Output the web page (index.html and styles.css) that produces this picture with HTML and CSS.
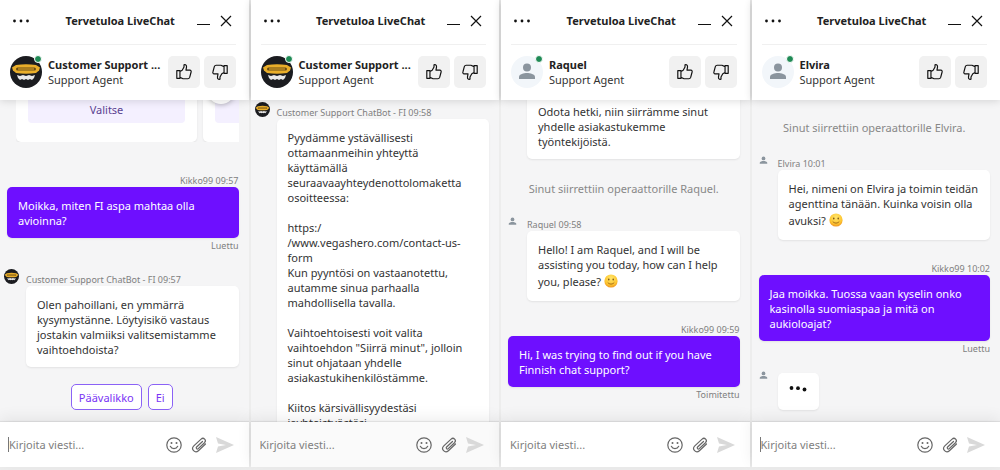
FILE: index.html
```html
<!DOCTYPE html>
<html lang="fi">
  <head>
    <meta charset="UTF-8" />
    <meta name="viewport" content="width=device-width, initial-scale=1.0" />
    <title>Tervetuloa LiveChat</title>
    <link rel="stylesheet" href="styles.css">
  </head>
  <body>
    <svg class="sprite" aria-hidden="true">
      <symbol id="icon-bot" viewBox="0 0 32 32">
        <circle cx="16" cy="16" r="16" fill="#1b1c20" />
        <path d="M6 9q10-1.500 20 0l4 2.500-1 3-3 2.500q-10 1.500-20 0l-3-2.500-1-3z" fill="#e9ae2a" />
        <rect x="6" y="11.500" width="20" height="3" rx="1.500" fill="#6b4d14" />
        <rect x="8" y="12.500" width="16" height="1" fill="#e9ae2a" />
        <path d="M7 19l3 1 3-1 3 1 3-1 3 1 3-1-1 3-2 2-2-1-2 1-2-1-2 1-2-1-2 1-2-2z" fill="#e8e8e8" />
      </symbol>
      <symbol id="icon-person" viewBox="0 0 32 32">
        <circle cx="16" cy="11.500" r="4" />
        <path d="M8 23v-2c0-3 5-4 8-4s8 1 8 4v2z" />
      </symbol>
      <symbol id="icon-thumb" viewBox="0 0 20 20">
        <path d="M2 8.500h3.500v8.500H2zM5.500 9.500L8 8l2-3.500V2c2-.5 3 .5 2.800 2.500L12.200 8h4.300c1.200 0 1.700 1 1.400 2l-1.600 6c-.3 1-1 1.500-2 1.500H9L5.500 16z" />
      </symbol>
      <symbol id="icon-smile" viewBox="0 0 16 16">
        <circle cx="8" cy="8" r="7.200" fill="none" stroke="#666" stroke-width="1.200" />
        <circle cx="5.500" cy="6" r="1" fill="#666" />
        <circle cx="10.500" cy="6" r="1" fill="#666" />
        <path d="M4.300 9.300c1.400 3 6 3 7.400 0" fill="none" stroke="#666" stroke-width="1.200" stroke-linecap="round" />
      </symbol>
      <symbol id="icon-clip" viewBox="0 0 18 18">
        <path d="M12.500 5.500L6.600 11c-1.100 1.100.4 2.700 1.600 1.600l6.300-5.900c2.400-2.400-.9-5.900-3.400-3.600L3.800 9.900c-3.300 3.200 1.200 8 4.600 4.800L15.500 8" fill="none" stroke="#666" stroke-width="1.200" stroke-linecap="round" />
      </symbol>
      <symbol id="icon-send" viewBox="0 0 18 16">
        <path d="M0 0l18 8-18 8 2-6.500L10 8 2 6.500z" fill="#d9d9d9" />
      </symbol>
      <symbol id="icon-close" viewBox="0 0 12 12">
        <path d="M1 1l10 10M11 1L1 11" fill="none" stroke="#111" stroke-width="1.200" />
      </symbol>
      <symbol id="icon-dots" viewBox="0 0 18 4">
        <circle cx="2.500" cy="2" r="1.400" />
        <circle cx="9" cy="2" r="1.400" />
        <circle cx="15.500" cy="2" r="1.400" />
      </symbol>
      <symbol id="icon-typing" viewBox="0 0 18 6">
        <circle cx="2.500" cy="2" r="1.900" />
        <circle cx="9" cy="2.200" r="1.900" />
        <circle cx="15.500" cy="3.500" r="1.900" />
      </symbol>
      <radialGradient id="face" cx=".5" cy=".3" r=".7">
        <stop offset="0" stop-color="#ffe56b" />
        <stop offset=".7" stop-color="#fdc530" />
        <stop offset="1" stop-color="#ee9322" />
      </radialGradient>
      <symbol id="icon-emoji" viewBox="0 0 14 14">
        <circle cx="7" cy="7" r="6.600" fill="url(#face)" />
        <ellipse cx="4.800" cy="5.500" rx=".7" ry="1" fill="#6b4511" />
        <ellipse cx="9.200" cy="5.500" rx=".7" ry="1" fill="#6b4511" />
        <path d="M4 8.800c1.500 1.800 4.500 1.800 6 0" fill="none" stroke="#8a5210" stroke-width=".8" stroke-linecap="round" />
      </symbol>
    </svg>

    <main class="chats">
      <section class="chat">
        <header class="chat-header">
          <div class="title-bar">
            <button class="icon-button" aria-label="Valikko"><svg class="icon-dots"><use href="#icon-dots" /></svg></button>
            <h2 class="title">Tervetuloa LiveChat</h2>
            <button class="icon-button minimize" aria-label="Pienennä"></button>
            <button class="icon-button" aria-label="Sulje"><svg class="icon-close"><use href="#icon-close" /></svg></button>
          </div>
          <div class="agent">
            <div class="avatar"><svg><use href="#icon-bot" /></svg><span class="online"></span></div>
            <div class="agent-info">
              <div class="agent-name">Customer Support ...</div>
              <div class="agent-role">Support Agent</div>
            </div>
            <button class="rate" aria-label="Hyvä"><svg><use href="#icon-thumb" /></svg></button>
            <button class="rate rate-down" aria-label="Huono"><svg><use href="#icon-thumb" /></svg></button>
          </div>
        </header>
        <div class="messages">
          <div class="carousel">
            <div class="card"><button class="card-button">Valitse</button></div>
            <div class="card"><button class="card-button" aria-label="Seuraava kortti"></button></div>
            <button class="carousel-next" aria-label="Seuraava"></button>
          </div>
          <div class="message own">
            <div class="meta">Kikko99 09:57</div>
            <div class="bubble">Moikka, miten FI aspa mahtaa olla avioinna?</div>
            <div class="status">Luettu</div>
          </div>
          <div class="message">
            <svg class="mini-avatar"><use href="#icon-bot" /></svg>
            <div class="meta">Customer Support ChatBot - FI 09:57</div>
            <div class="bubble">Olen pahoillani, en ymmärrä kysymystänne. Löytyisikö vastaus jostakin valmiiksi valitsemistamme vaihtoehdoista?</div>
          </div>
          <div class="choices">
            <button class="choice">Päävalikko</button>
            <button class="choice">Ei</button>
          </div>
        </div>
        <form class="composer">
          <input class="composer-input focused" type="text" aria-label="Viesti" placeholder="Kirjoita viesti..." />
          <button class="icon-button" type="button" aria-label="Hymiöt"><svg class="icon-smile"><use href="#icon-smile" /></svg></button>
          <button class="icon-button" type="button" aria-label="Liite"><svg class="icon-clip"><use href="#icon-clip" /></svg></button>
          <button class="icon-button" type="button" aria-label="Lähetä"><svg class="icon-send"><use href="#icon-send" /></svg></button>
        </form>
      </section>

      <section class="chat">
        <header class="chat-header">
          <div class="title-bar">
            <button class="icon-button" aria-label="Valikko"><svg class="icon-dots"><use href="#icon-dots" /></svg></button>
            <h2 class="title">Tervetuloa LiveChat</h2>
            <button class="icon-button minimize" aria-label="Pienennä"></button>
            <button class="icon-button" aria-label="Sulje"><svg class="icon-close"><use href="#icon-close" /></svg></button>
          </div>
          <div class="agent">
            <div class="avatar"><svg><use href="#icon-bot" /></svg><span class="online"></span></div>
            <div class="agent-info">
              <div class="agent-name">Customer Support ...</div>
              <div class="agent-role">Support Agent</div>
            </div>
            <button class="rate" aria-label="Hyvä"><svg><use href="#icon-thumb" /></svg></button>
            <button class="rate rate-down" aria-label="Huono"><svg><use href="#icon-thumb" /></svg></button>
          </div>
        </header>
        <div class="messages messages-top">
          <div class="message">
            <svg class="mini-avatar"><use href="#icon-bot" /></svg>
            <div class="meta">Customer Support ChatBot - FI 09:58</div>
            <div class="bubble">Pyydämme ystävällisesti ottamaanmeihin yhteyttä käyttämällä seuraavaayhteydenottolomaketta osoitteessa:<br /><br />https:/<br />/www.vegashero.com/contact-us-form<br />Kun pyyntösi on vastaanotettu, autamme sinua parhaalla mahdollisella tavalla.<br /><br />Vaihtoehtoisesti voit valita vaihtoehdon "Siirrä minut", jolloin sinut ohjataan yhdelle asiakastukihenkilöstämme.<br /><br />Kiitos kärsivällisyydestäsi jayhteistyöstäsi.</div>
          </div>
        </div>
        <form class="composer composer-muted">
          <input class="composer-input" type="text" aria-label="Viesti" placeholder="Kirjoita viesti..." />
          <button class="icon-button" type="button" aria-label="Hymiöt"><svg class="icon-smile"><use href="#icon-smile" /></svg></button>
          <button class="icon-button" type="button" aria-label="Liite"><svg class="icon-clip"><use href="#icon-clip" /></svg></button>
          <button class="icon-button" type="button" aria-label="Lähetä"><svg class="icon-send"><use href="#icon-send" /></svg></button>
        </form>
      </section>

      <section class="chat">
        <header class="chat-header">
          <div class="title-bar">
            <button class="icon-button" aria-label="Valikko"><svg class="icon-dots"><use href="#icon-dots" /></svg></button>
            <h2 class="title">Tervetuloa LiveChat</h2>
            <button class="icon-button minimize" aria-label="Pienennä"></button>
            <button class="icon-button" aria-label="Sulje"><svg class="icon-close"><use href="#icon-close" /></svg></button>
          </div>
          <div class="agent">
            <div class="avatar avatar-person"><svg><use href="#icon-person" /></svg><span class="online"></span></div>
            <div class="agent-info">
              <div class="agent-name">Raquel</div>
              <div class="agent-role">Support Agent</div>
            </div>
            <button class="rate" aria-label="Hyvä"><svg><use href="#icon-thumb" /></svg></button>
            <button class="rate rate-down" aria-label="Huono"><svg><use href="#icon-thumb" /></svg></button>
          </div>
        </header>
        <div class="messages">
          <div class="message">
            <div class="bubble">Odota hetki, niin siirrämme sinut yhdelle asiakastukemme työntekijöistä.</div>
          </div>
          <div class="notice">Sinut siirrettiin operaattorille Raquel.</div>
          <div class="message">
            <svg class="mini-avatar mini-person"><use href="#icon-person" /></svg>
            <div class="meta">Raquel 09:58</div>
            <div class="bubble">Hello! I am Raquel, and I will be assisting you today, how can I help you, please? <svg class="emoji"><use href="#icon-emoji" /></svg></div>
          </div>
          <div class="message own last">
            <div class="meta">Kikko99 09:59</div>
            <div class="bubble">Hi, I was trying to find out if you have Finnish chat support?</div>
            <div class="status">Toimitettu</div>
          </div>
        </div>
        <form class="composer">
          <input class="composer-input" type="text" aria-label="Viesti" placeholder="Kirjoita viesti..." />
          <button class="icon-button" type="button" aria-label="Hymiöt"><svg class="icon-smile"><use href="#icon-smile" /></svg></button>
          <button class="icon-button" type="button" aria-label="Liite"><svg class="icon-clip"><use href="#icon-clip" /></svg></button>
          <button class="icon-button" type="button" aria-label="Lähetä"><svg class="icon-send"><use href="#icon-send" /></svg></button>
        </form>
      </section>

      <section class="chat">
        <header class="chat-header">
          <div class="title-bar">
            <button class="icon-button" aria-label="Valikko"><svg class="icon-dots"><use href="#icon-dots" /></svg></button>
            <h2 class="title">Tervetuloa LiveChat</h2>
            <button class="icon-button minimize" aria-label="Pienennä"></button>
            <button class="icon-button" aria-label="Sulje"><svg class="icon-close"><use href="#icon-close" /></svg></button>
          </div>
          <div class="agent">
            <div class="avatar avatar-person"><svg><use href="#icon-person" /></svg><span class="online"></span></div>
            <div class="agent-info">
              <div class="agent-name">Elvira</div>
              <div class="agent-role">Support Agent</div>
            </div>
            <button class="rate" aria-label="Hyvä"><svg><use href="#icon-thumb" /></svg></button>
            <button class="rate rate-down" aria-label="Huono"><svg><use href="#icon-thumb" /></svg></button>
          </div>
        </header>
        <div class="messages">
          <div class="notice">Sinut siirrettiin operaattorille Elvira.</div>
          <div class="message">
            <svg class="mini-avatar mini-person"><use href="#icon-person" /></svg>
            <div class="meta">Elvira 10:01</div>
            <div class="bubble">Hei, nimeni on Elvira ja toimin teidän agenttina tänään. Kuinka voisin olla avuksi? <svg class="emoji"><use href="#icon-emoji" /></svg></div>
          </div>
          <div class="message own">
            <div class="meta">Kikko99 10:02</div>
            <div class="bubble">Jaa moikka. Tuossa vaan kyselin onko kasinolla suomiaspaa ja mitä on aukioloajat?</div>
            <div class="status">Luettu</div>
          </div>
          <div class="message message-typing">
            <svg class="mini-avatar mini-person"><use href="#icon-person" /></svg>
            <div class="bubble typing"><svg class="icon-typing"><use href="#icon-typing" /></svg></div>
          </div>
        </div>
        <form class="composer">
          <input class="composer-input focused" type="text" aria-label="Viesti" placeholder="Kirjoita viesti..." />
          <button class="icon-button" type="button" aria-label="Hymiöt"><svg class="icon-smile"><use href="#icon-smile" /></svg></button>
          <button class="icon-button" type="button" aria-label="Liite"><svg class="icon-clip"><use href="#icon-clip" /></svg></button>
          <button class="icon-button" type="button" aria-label="Lähetä"><svg class="icon-send"><use href="#icon-send" /></svg></button>
        </form>
      </section>
    </main>
  </body>
</html>
```
FILE: styles.css
```css
* {
  box-sizing: border-box;
}
body {
  margin: 0;
  font-family: "Noto Sans", sans-serif;
  font-size: 11px;
  line-height: 15px;
  color: #333;
  background-color: #f0f0f0;
}
button,
input {
  font: inherit;
  color: inherit;
}
svg {
  display: block;
}
.sprite {
  position: absolute;
  width: 0;
  height: 0;
}
.chats {
  display: grid;
  grid-template-columns: repeat(4, minmax(0, 1fr));
  gap: 2px;
  height: 100vh;
  padding-bottom: 3px;
  background-color: #ededed;
}
.chat {
  display: flex;
  flex-direction: column;
  min-height: 0;
  background-color: #f5f5f6;
}

/* header */
.chat-header {
  position: relative;
  z-index: 1;
  padding: 0 13px 12px 10px;
  background-color: white;
  box-shadow: 0 1px 8px rgba(0, 0, 0, 0.14);
}
.title-bar {
  display: flex;
  align-items: center;
  gap: 10px;
  height: 45px;
  padding: 0 4px 3px 2px;
  border-bottom: 1px solid #f0f0f0;
}
.title {
  flex: 1;
  margin: 0;
  padding-left: 14px;
  text-align: center;
  font-size: 11px;
  font-weight: 700;
  color: #222;
}
.icon-button {
  flex: none;
  padding: 0;
  border: none;
  background: none;
  cursor: pointer;
}
.icon-dots {
  width: 18px;
  height: 4px;
  fill: #111;
}
.icon-close {
  width: 12px;
  height: 12px;
}
.minimize {
  width: 13px;
  height: 8px;
  border-bottom: 1px solid #111;
}
.agent {
  display: flex;
  align-items: center;
  gap: 4px;
  padding-top: 11px;
}
.avatar {
  position: relative;
  flex: none;
  width: 32px;
  height: 32px;
  border-radius: 50%;
}
.avatar svg {
  width: 32px;
  height: 32px;
}
.avatar-person {
  background-color: #f2f6fa;
  fill: #8b959e;
}
.online {
  position: absolute;
  top: -1px;
  right: 0;
  width: 8px;
  height: 8px;
  border: 1px solid white;
  border-radius: 50%;
  background-color: #1f8a55;
}
.agent-info {
  flex: 1;
  min-width: 0;
  padding-left: 2px;
  white-space: nowrap;
}
.agent-name {
  font-weight: 700;
  color: #222;
}
.rate {
  flex: none;
  display: grid;
  place-items: center;
  width: 32px;
  height: 32px;
  padding: 0;
  border: none;
  border-radius: 5px;
  background-color: #f1f1f1;
}
.rate svg {
  width: 18px;
  height: 18px;
  fill: none;
  stroke: #111;
  stroke-width: 1.3px;
  stroke-linejoin: round;
}
.rate-down svg {
  transform: rotate(180deg);
}

/* messages */
.messages {
  flex: 1;
  min-height: 0;
  display: flex;
  flex-direction: column;
  justify-content: flex-end;
  padding: 0 10px 12px 7px;
  overflow: hidden;
}
.messages-top {
  justify-content: flex-start;
  padding-top: 7px;
}
.message {
  position: relative;
  flex: none;
  margin-top: 22px;
  padding-left: 19px;
}
.messages-top .message {
  margin-top: 0;
}
.own {
  margin-top: 23px;
  padding-left: 0;
  text-align: right;
}
.last {
  margin-bottom: 9px;
}
.meta,
.status {
  font-size: 9px;
  line-height: 12px;
  color: #808080;
}
.status {
  margin-top: 2px;
}
.bubble {
  padding: 11px 11px 10px;
  border-radius: 5px;
  background-color: white;
  box-shadow: 0 1px 2px rgba(0, 0, 0, 0.08);
  overflow-wrap: break-word;
}
.own .bubble {
  text-align: left;
  color: white;
  background-color: #6e0fff;
}
.mini-avatar {
  position: absolute;
  top: -5px;
  left: -3px;
  width: 15px;
  height: 15px;
}
.mini-person {
  fill: #8b959e;
}
.emoji {
  display: inline-block;
  width: 14px;
  height: 14px;
  margin: 2px 0 3px;
  vertical-align: -5px;
}
.notice {
  flex: none;
  margin-top: 22px;
  text-align: center;
  color: #888;
}
.notice + .message {
  margin-top: 23px;
}
.message-typing {
  margin-top: 18px;
}
.typing {
  width: 41px;
  height: 37px;
  padding-top: 13px;
}
.icon-typing {
  width: 18px;
  height: 6px;
  fill: #111;
}

/* carousel */
.carousel {
  position: relative;
  flex: none;
  display: flex;
  gap: 6px;
  margin: 0 0 11px 9px;
  overflow: hidden;
}
.carousel + .own {
  margin-top: 22px;
}
.card {
  flex: none;
  width: 181px;
  padding: 40px 12px 17px;
  border-radius: 5px;
  background-color: white;
  box-shadow: 0 1px 2px rgba(0, 0, 0, 0.08);
}
.card-button {
  width: 100%;
  height: 27px;
  border: none;
  border-radius: 4px;
  color: #5b4291;
  background-color: #f4f0ff;
}
.carousel-next {
  position: absolute;
  right: 4px;
  bottom: 38px;
  width: 28px;
  height: 28px;
  border: none;
  border-radius: 50%;
  background-color: white;
  box-shadow: 0 1px 5px rgba(0, 0, 0, 0.25);
}
.choices {
  flex: none;
  display: flex;
  justify-content: center;
  gap: 6px;
  margin-top: 17px;
  padding-right: 2px;
}
.choice {
  height: 26px;
  padding: 0 7px;
  border: 1px solid #8b62f6;
  border-radius: 5px;
  color: #7a33f5;
  background-color: white;
}

/* composer */
.composer {
  position: relative;
  flex: none;
  display: flex;
  align-items: center;
  gap: 8px;
  height: 45px;
  padding: 0 15px 0 8px;
  background-color: white;
  box-shadow: 0 -1px 1px rgba(0, 0, 0, 0.08), 0 -4px 14px rgba(0, 0, 0, 0.07);
}
.composer-muted {
  background-color: #fafafa;
}
.composer-input {
  flex: 1;
  min-width: 0;
  height: 15px;
  padding: 0;
  border: none;
  border-left: 1px solid transparent;
  outline: none;
  background: none;
}
.composer-input.focused {
  border-left-color: #777;
}
.composer-input::placeholder {
  color: #808080;
}
.icon-smile {
  width: 16px;
  height: 16px;
}
.icon-clip {
  width: 18px;
  height: 18px;
}
.icon-send {
  width: 18px;
  height: 16px;
}
```
